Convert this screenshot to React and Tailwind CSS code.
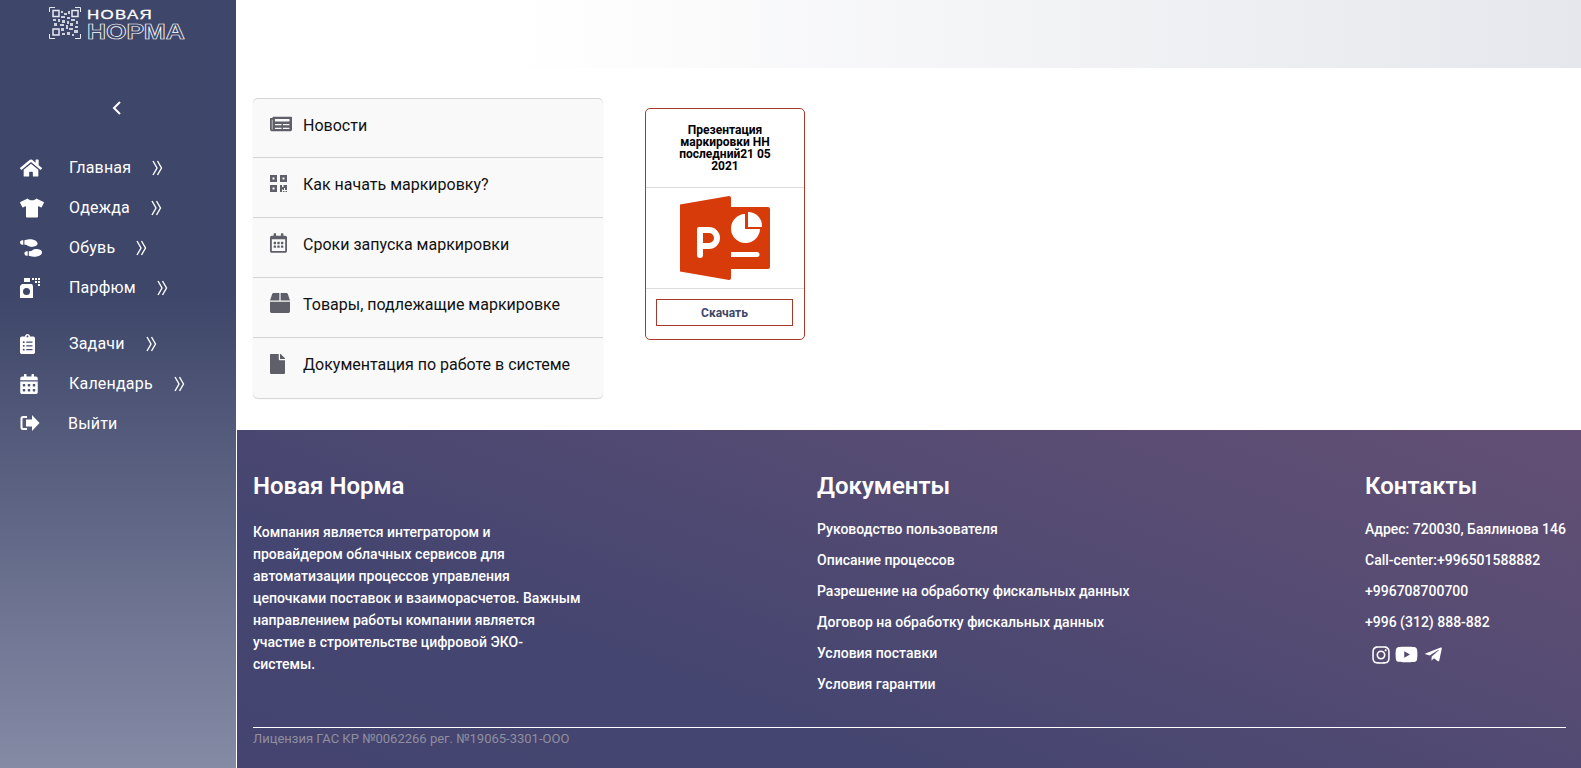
import React from "react";
import {
  FaHome,
  FaTshirt,
  FaShoePrints,
  FaClipboardList,
  FaCalendarAlt,
  FaNewspaper,
  FaBox,
  FaFile,
  FaInstagram,
  FaYoutube,
  FaTelegramPlane,
  FaRegCalendarAlt,
} from "react-icons/fa";

const ChevronsIcon = () => (
  <svg width="11" height="16" viewBox="0 0 11 16" fill="none" stroke="currentColor" strokeWidth="1.4">
    <path d="M1 1l4 7-4 7M5.500 1l4 7-4 7" />
  </svg>
);

const PerfumeIcon = () => (
  <svg width="20" height="22" viewBox="0 0 20 22" fill="currentColor">
    <rect x="4" y="1" width="6" height="4" />
    <path fillRule="evenodd" d="M2 7h10l1 2v12H0V9zM6.500 11a3.500 3.500 0 100 7 3.500 3.500 0 000-7z" />
    <rect x="12" y="1" width="2" height="2" />
    <rect x="15" y="1" width="2" height="2" />
    <rect x="18" y="1" width="2" height="2" />
    <rect x="15" y="4" width="2" height="2" />
    <rect x="18" y="4" width="2" height="2" />
    <rect x="18" y="7" width="2" height="2" />
  </svg>
);

const ExitIcon = () => (
  <svg width="20" height="16" viewBox="0 0 20 16" fill="currentColor">
    <path d="M7 1H3a2.500 2.500 0 00-2.500 2.500v9A2.500 2.500 0 003 15h4v-2H3.500a1 1 0 01-1-1V4a1 1 0 011-1H7z" />
    <path d="M12 0l7.500 8-7.500 8v-4.500H6v-7h6z" />
  </svg>
);

const QrSquares = () => (
  <svg width="17" height="17" viewBox="0 0 17 17" fill="currentColor">
    <path fillRule="evenodd" d="M0 0h7v7H0zM2.500 2.500v2h2v-2z" />
    <path fillRule="evenodd" d="M10 0h7v7h-7zM12.500 2.500v2h2v-2z" />
    <path fillRule="evenodd" d="M0 10h7v7H0zM2.500 12.500v2h2v-2z" />
    <path d="M10 10h2v2h1.500v-2H17v5h-2v-2h-1v2h-1.500v-1H12v3h-2zM13 16h1.500v1H13zM15.500 16H17v1h-1.500z" />
  </svg>
);

const QrLogo = () => (
  <svg width="32" height="32" viewBox="0 0 32 32" fill="none" stroke="#e8e9f0" className="shrink-0">
    <path d="M.5 5V.5H6M26 .5h5.500V5M.5 27v4.500H6M26 31.500h5.500V27" strokeWidth="1" />
    <rect x="4" y="3.500" width="6" height="6" strokeWidth="1.500" />
    <rect x="23" y="3.500" width="6" height="6" strokeWidth="1.500" />
    <rect x="4" y="22" width="6" height="6" strokeWidth="1.500" />
    <path
      d="M12 4h2v2h-2zM15 6h3v2h-3zM19 4h2v3h-2zM12 9h4v2h-4zM18 10h3v2h-3zM4 12h3v2H4zM9 12h2v3H9zM13 13h3v3h-3zM18 14h2v3h-2zM22 12h4v2h-4zM27 14h2v3h-2zM5 16h3v3H5zM11 17h4v2h-4zM17 18h2v4h-2zM21 16h3v3h-3zM26 19h3v2h-3zM12 21h3v3h-3zM20 21h4v2h-4zM25 23h4v3h-4zM13 26h3v2h-3zM18 25h3v3h-3zM23 27h2v2h-2z"
      fill="#e8e9f0"
      stroke="none"
      opacity="0.85"
    />
  </svg>
);

const PptIcon = () => (
  <svg width="90" height="84" viewBox="0 0 90 84" fill="#d83b0a">
    <path d="M0 8.500L49 0c1 0 2 .8 2 2v80c0 1.200-1 2-2 2L0 75.500z" />
    <rect x="45" y="11" width="45" height="62" rx="2" />
    <path
      d="M17 33a2 2 0 012-2h10a11 11 0 010 22h-6v6a3 3 0 01-6 0zM23 37v10h6a5 5 0 000-10z"
      fill="#fff"
      fillRule="evenodd"
    />
    <path d="M65 18A14.500 14.500 0 1080 33H65z" fill="#fff" />
    <path d="M68 16a14 14 0 0114 14v1H68z" fill="#fff" />
    <path d="M51 56h26a2.500 2.500 0 010 5H51z" fill="#fff" />
  </svg>
);

const menuItems = [
  { title: "Главная", icon: <FaHome size={22} /> },
  { title: "Одежда", icon: <FaTshirt size={24} /> },
  { title: "Обувь", icon: <FaShoePrints size={22} className="-scale-y-100" /> },
  { title: "Парфюм", icon: <PerfumeIcon /> },
];

const menuItems2 = [
  { title: "Задачи", icon: <FaClipboardList className="w-[15px] h-[20px]" /> },
  { title: "Календарь", icon: <FaCalendarAlt className="w-[18px] h-[20px]" /> },
];

const listItems = [
  { title: "Новости", icon: <FaNewspaper size={22} />, row: "h-[59px] pb-[5px]" },
  { title: "Как начать маркировку?", icon: <QrSquares />, row: "h-[60px] pb-[6px]" },
  { title: "Сроки запуска маркировки", icon: <FaRegCalendarAlt className="w-[17px] h-[20px]" />, row: "h-[60px] pb-[6px]" },
  { title: "Товары, подлежащие маркировке", icon: <FaBox className="w-[20px] h-[20px]" />, row: "h-[60px] pb-[6px]" },
  { title: "Документация по работе в системе", icon: <FaFile className="w-[15px] h-[20px]" />, row: "h-[60px] pb-[6px]" },
];

const docs = [
  "Руководство пользователя",
  "Описание процессов",
  "Разрешение на обработку фискальных данных",
  "Договор на обработку фискальных данных",
  "Условия поставки",
  "Условия гарантии",
];

const contacts = [
  "Адрес: 720030, Баялинова 146",
  "Call-center:+996501588882",
  "+996708700700",
  "+996 (312) 888-882",
];

const MenuRow = ({ item }) => (
  <div className="flex items-center h-[40px] text-white">
    <span className="w-[49px] flex justify-start pl-[20px] box-content shrink-0">{item.icon}</span>
    <span className="text-[16px] leading-none tracking-[0.2px]">{item.title}</span>
    <span className="ml-[21px]">
      <ChevronsIcon />
    </span>
  </div>
);

const App = () => {
  return (
    <div className="flex h-[768px] w-[1581px] overflow-hidden bg-white font-['Roboto',sans-serif]">
      <aside className="w-[236px] shrink-0 bg-[linear-gradient(180deg,#3e4669_0%,#3e4669_38%,#858aa5_100%)]">
        <div className="flex items-start gap-[6px] pl-[49px] pt-[7px] h-[68px]">
          <QrLogo />
          <div className="text-white font-['Liberation_Sans',sans-serif] leading-none pt-[1px]">
            <div className="text-[13px] tracking-[1px] h-[13px] scale-x-[1.3] origin-left [-webkit-text-stroke:0.3px_#ffffff]">
              НОВАЯ
            </div>
            <div className="text-[22px] h-[20px] scale-x-[1.2] origin-left text-transparent font-bold [-webkit-text-stroke:0.7px_#ffffff]">
              НОРМА
            </div>
          </div>
        </div>
        <div className="flex justify-center pt-[33px] pr-[2px] h-[80px] text-white">
          <svg width="10" height="14" viewBox="0 0 10 14" fill="none" stroke="currentColor" strokeWidth="2">
            <path d="M8 1L2 7l6 6" />
          </svg>
        </div>
        {menuItems.map((item) => (
          <MenuRow key={item.title} item={item} />
        ))}
        <div className="h-[16px]" />
        {menuItems2.map((item) => (
          <MenuRow key={item.title} item={item} />
        ))}
        <div className="flex items-center h-[40px] text-white">
          <span className="w-[48px] pl-[20px] box-content shrink-0 -mt-[3px]">
            <ExitIcon />
          </span>
          <span className="text-[16px] leading-none tracking-[0.2px]">Выйти</span>
        </div>
      </aside>

      <div className="flex-1 flex flex-col min-w-0">
        <div className="h-[68px] shrink-0 bg-[linear-gradient(90deg,#ffffff_20%,#e6e7ec_100%)]" />

        <main className="h-[362px] shrink-0 flex items-start pl-[17px] pt-[30px]">
          <div className="w-[350px] rounded-[5px] bg-[#f9f9f9] border-t border-[#d4d4d4] shadow-[0_1px_1px_rgba(0,0,0,0.18)] overflow-hidden">
            {listItems.map((item, i) => (
              <div
                key={item.title}
                className={`flex items-center ${item.row} ${i < 4 ? "border-b border-[#d4d4d4]" : ""}`}
              >
                <span className="w-[33px] pl-[17px] box-content shrink-0 text-[#5f5f69] flex -mt-[3px]">
                  {item.icon}
                </span>
                <span className="text-[16px] text-[#111]">{item.title}</span>
              </div>
            ))}
          </div>

          <div className="ml-[42px] mt-[10px] w-[160px] h-[232px] rounded-[5px] border border-[#a53a2c] bg-white flex flex-col">
            <div className="h-[79px] border-b border-[#dcdcdc] pt-[15px] px-[20px] text-center text-[12px] leading-[12px] font-bold text-black shrink-0">
              Презентация маркировки НН последний21 05 2021
            </div>
            <div className="h-[101px] border-b border-[#dcdcdc] flex items-center justify-center shrink-0">
              <PptIcon />
            </div>
            <div className="flex-1 pl-[10px] pr-[11px] pt-[10px]">
              <div className="h-[27px] border border-[#a53a2c] flex items-center justify-center text-[12px] font-bold text-[#3e4669]">
                Скачать
              </div>
            </div>
          </div>
        </main>

        <footer className="ml-px flex-1 pl-[16px] pr-[15px] text-white bg-[linear-gradient(200deg,#634f75_0%,#574c73_30%,#444570_70%,#454470_100%)]">
          <div className="flex h-[297px]">
            <div className="w-[564px] shrink-0 pt-[42px]">
              <h3 className="text-[24px] leading-[28px] font-semibold">Новая Норма</h3>
              <p className="mt-[21px] w-[330px] text-[14px] leading-[22px] font-medium">
                Компания является интегратором и провайдером облачных сервисов для автоматизации процессов
                управления цепочками поставок и взаиморасчетов. Важным направлением работы компании является
                участие в строительстве цифровой ЭКО-системы.
              </p>
            </div>
            <div className="w-[548px] shrink-0 pt-[42px]">
              <h3 className="text-[24px] leading-[28px] font-semibold">Документы</h3>
              <ul className="mt-[14px] text-[14px] font-medium">
                {docs.map((doc) => (
                  <li key={doc} className="h-[31px] leading-[31px]">
                    {doc}
                  </li>
                ))}
              </ul>
            </div>
            <div className="pt-[42px] whitespace-nowrap">
              <h3 className="text-[24px] leading-[28px] font-semibold">Контакты</h3>
              <ul className="mt-[14px] text-[14px] font-medium">
                {contacts.map((c) => (
                  <li key={c} className="h-[31px] leading-[31px]">
                    {c}
                  </li>
                ))}
              </ul>
              <div className="flex items-center gap-[4px] pl-[6px] mt-[5px]">
                <FaInstagram size={20} />
                <FaYoutube size={23} />
                <FaTelegramPlane size={19} className="ml-[2px]" />
              </div>
            </div>
          </div>
          <div className="border-t border-white text-[13px] leading-[22px] text-[#8f8f9f]">
            Лицензия ГАС КР №0062266 рег. №19065-3301-ООО
          </div>
        </footer>
      </div>
    </div>
  );
};

export default App;
